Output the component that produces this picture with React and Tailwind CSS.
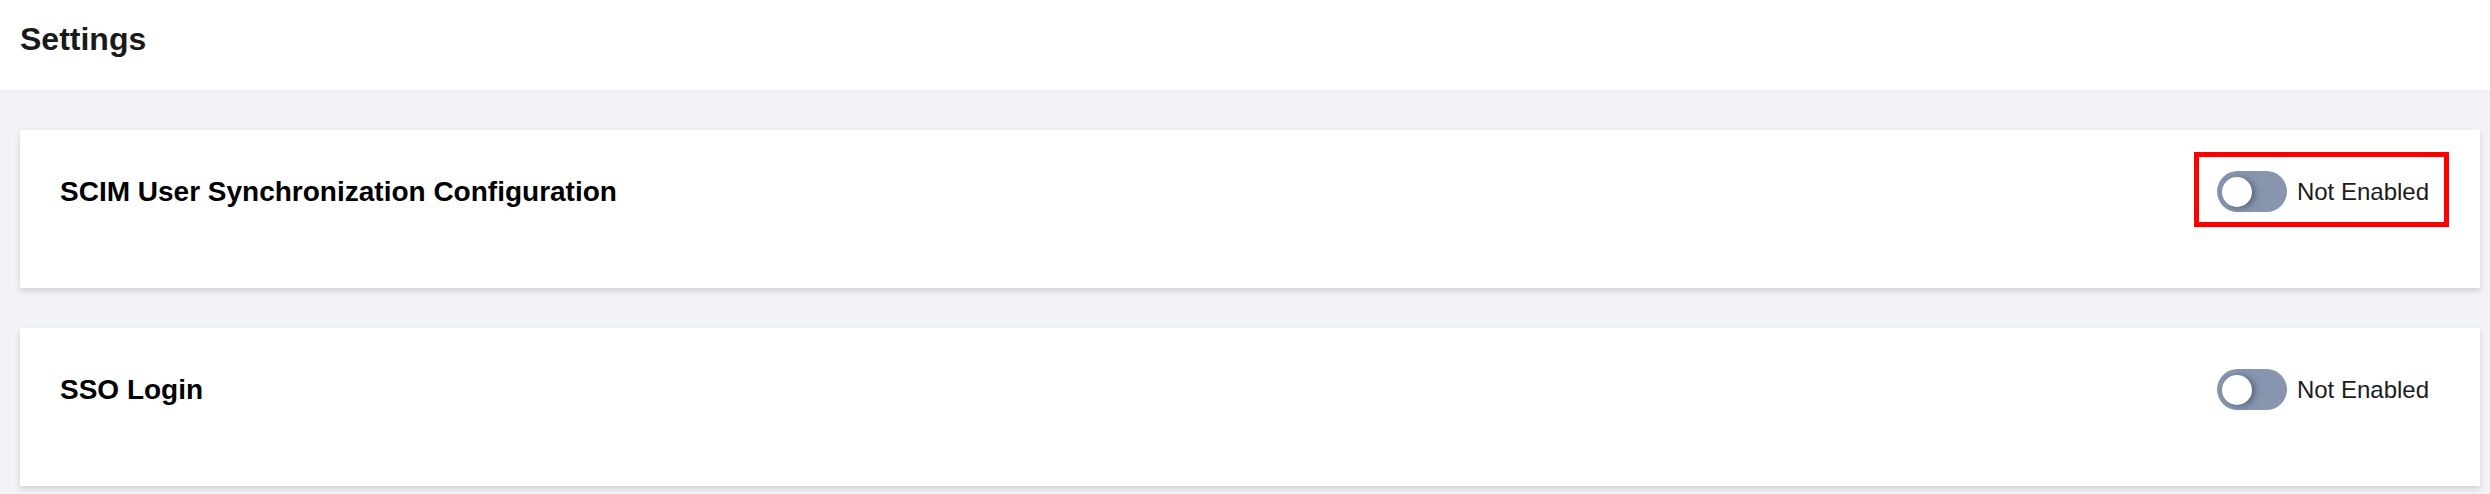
import React from 'react';

const Toggle = () => (
    <div className="relative flex h-[41px] w-[70px] shrink-0 items-center rounded-full bg-[#8796ae] pl-[5px]">
        <span className="h-[30px] w-[30px] rounded-full bg-white shadow-[3px_1px_6px_rgba(45,55,80,0.55)]" />
    </div>
);

const SettingCard = ({ title, highlighted }) => (
    <section className="flex h-[158px] items-start justify-between bg-white pl-[40px] pr-[51px] pt-[41px] shadow-[0_3px_6px_rgba(0,0,0,0.14)]">
        <div className="flex h-[41px] items-center">
            <h2 className="mt-[1px] text-[28px] font-bold leading-[28px] text-[#000]">{title}</h2>
        </div>

        <div className="relative flex h-[41px] items-center">
            <Toggle />
            <span className="ml-[10px] text-[24px] leading-[24px] text-[#1c1c1c]">Not Enabled</span>
            {/* annotation box around the first switch */}
            {highlighted && (
                <span className="pointer-events-none absolute -bottom-[15px] -left-[23px] -right-[20px] -top-[19px] border-[5px] border-[#ff0000]" />
            )}
        </div>
    </section>
);

export default function App() {
    return (
        <div
            className="min-h-[494px] w-full bg-[#f2f3f7]"
            style={{ fontFamily: '"Liberation Sans", Arial, sans-serif' }}
        >
            {/* Header */}
            <header className="h-[90px] bg-white px-[20px] pt-[23px]">
                <h1 className="text-[32px] font-bold leading-[32px] text-[#1a1a1a]">Settings</h1>
            </header>

            {/* Cards */}
            <main className="flex flex-col gap-[40px] pl-[20px] pr-[10px] pt-[40px]">
                <SettingCard title="SCIM User Synchronization Configuration" highlighted />
                <SettingCard title="SSO Login" />
            </main>
        </div>
    );
}
